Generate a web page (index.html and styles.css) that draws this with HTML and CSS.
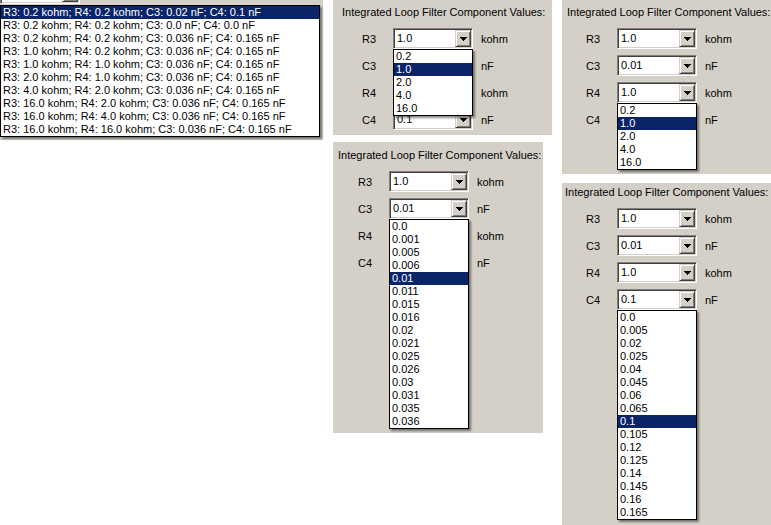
FILE: index.html
```html
<!DOCTYPE html>
<html lang="en">
<head>
    <meta charset="UTF-8">
    <title>Loop Filter Component Values</title>
    <link rel="stylesheet" href="styles.css">
</head>
<body>
<div class="page">
    <div class="col col-left">
        <div class="picker">
            <div class="stub">
                <div class="combo combo-wide">
                    <div class="value"></div>
                    <div class="btn"><svg width="7" height="4" viewBox="0 0 7 4"><path d="M0 0h7v1H0zM1 1h5v1H1zM2 2h3v1H2zM3 3h1v1H3z"/></svg></div>
                </div>
            </div>
            <div class="droplist biglist">
                <div class="item selected">R3: 0.2 kohm; R4: 0.2 kohm; C3: 0.02 nF; C4: 0.1 nF</div>
                <div class="item">R3: 0.2 kohm; R4: 0.2 kohm; C3: 0.0 nF; C4: 0.0 nF</div>
                <div class="item">R3: 0.2 kohm; R4: 0.2 kohm; C3: 0.036 nF; C4: 0.165 nF</div>
                <div class="item">R3: 1.0 kohm; R4: 0.2 kohm; C3: 0.036 nF; C4: 0.165 nF</div>
                <div class="item">R3: 1.0 kohm; R4: 1.0 kohm; C3: 0.036 nF; C4: 0.165 nF</div>
                <div class="item">R3: 2.0 kohm; R4: 1.0 kohm; C3: 0.036 nF; C4: 0.165 nF</div>
                <div class="item">R3: 4.0 kohm; R4: 2.0 kohm; C3: 0.036 nF; C4: 0.165 nF</div>
                <div class="item">R3: 16.0 kohm; R4: 2.0 kohm; C3: 0.036 nF; C4: 0.165 nF</div>
                <div class="item">R3: 16.0 kohm; R4: 4.0 kohm; C3: 0.036 nF; C4: 0.165 nF</div>
                <div class="item">R3: 16.0 kohm; R4: 16.0 kohm; C3: 0.036 nF; C4: 0.165 nF</div>
            </div>
        </div>
    </div>

    <div class="col col-mid">
        <!-- R3 list open -->
        <div class="panel panel-a">
            <div class="title">Integrated Loop Filter Component Values:</div>
            <div class="row">
                <span class="label">R3</span>
                <div class="combo-wrap">
                    <div class="combo"><div class="value">1.0</div><div class="btn"><svg width="7" height="4" viewBox="0 0 7 4"><path d="M0 0h7v1H0zM1 1h5v1H1zM2 2h3v1H2zM3 3h1v1H3z"/></svg></div></div>
                    <div class="droplist">
                        <div class="item">0.2</div>
                        <div class="item selected">1.0</div>
                        <div class="item">2.0</div>
                        <div class="item">4.0</div>
                        <div class="item">16.0</div>
                    </div>
                </div>
                <span class="unit">kohm</span>
            </div>
            <div class="row">
                <span class="label">C3</span>
                <div class="combo-wrap">
                    <div class="combo"><div class="value"></div><div class="btn"></div></div>
                </div>
                <span class="unit">nF</span>
            </div>
            <div class="row">
                <span class="label">R4</span>
                <div class="combo-wrap">
                    <div class="combo"><div class="value"></div><div class="btn"></div></div>
                </div>
                <span class="unit">kohm</span>
            </div>
            <div class="row">
                <span class="label">C4</span>
                <div class="combo-wrap">
                    <div class="combo"><div class="value">0.1</div><div class="btn"><svg width="7" height="4" viewBox="0 0 7 4"><path d="M0 0h7v1H0zM1 1h5v1H1zM2 2h3v1H2zM3 3h1v1H3z"/></svg></div></div>
                </div>
                <span class="unit">nF</span>
            </div>
        </div>

        <!-- C3 list open -->
        <div class="panel panel-b">
            <div class="title">Integrated Loop Filter Component Values:</div>
            <div class="row">
                <span class="label">R3</span>
                <div class="combo-wrap">
                    <div class="combo"><div class="value">1.0</div><div class="btn"><svg width="7" height="4" viewBox="0 0 7 4"><path d="M0 0h7v1H0zM1 1h5v1H1zM2 2h3v1H2zM3 3h1v1H3z"/></svg></div></div>
                </div>
                <span class="unit">kohm</span>
            </div>
            <div class="row">
                <span class="label">C3</span>
                <div class="combo-wrap">
                    <div class="combo"><div class="value">0.01</div><div class="btn"><svg width="7" height="4" viewBox="0 0 7 4"><path d="M0 0h7v1H0zM1 1h5v1H1zM2 2h3v1H2zM3 3h1v1H3z"/></svg></div></div>
                    <div class="droplist">
                        <div class="item">0.0</div>
                        <div class="item">0.001</div>
                        <div class="item">0.005</div>
                        <div class="item">0.006</div>
                        <div class="item selected">0.01</div>
                        <div class="item">0.011</div>
                        <div class="item">0.015</div>
                        <div class="item">0.016</div>
                        <div class="item">0.02</div>
                        <div class="item">0.021</div>
                        <div class="item">0.025</div>
                        <div class="item">0.026</div>
                        <div class="item">0.03</div>
                        <div class="item">0.031</div>
                        <div class="item">0.035</div>
                        <div class="item">0.036</div>
                    </div>
                </div>
                <span class="unit">nF</span>
            </div>
            <div class="row">
                <span class="label">R4</span>
                <div class="combo-wrap">
                    <div class="combo"><div class="value"></div><div class="btn"></div></div>
                </div>
                <span class="unit">kohm</span>
            </div>
            <div class="row">
                <span class="label">C4</span>
                <div class="combo-wrap">
                    <div class="combo"><div class="value"></div><div class="btn"></div></div>
                </div>
                <span class="unit">nF</span>
            </div>
        </div>
    </div>

    <div class="col col-right">
        <!-- R4 list open -->
        <div class="panel panel-c">
            <div class="title">Integrated Loop Filter Component Values:</div>
            <div class="row">
                <span class="label">R3</span>
                <div class="combo-wrap">
                    <div class="combo"><div class="value">1.0</div><div class="btn"><svg width="7" height="4" viewBox="0 0 7 4"><path d="M0 0h7v1H0zM1 1h5v1H1zM2 2h3v1H2zM3 3h1v1H3z"/></svg></div></div>
                </div>
                <span class="unit">kohm</span>
            </div>
            <div class="row">
                <span class="label">C3</span>
                <div class="combo-wrap">
                    <div class="combo"><div class="value">0.01</div><div class="btn"><svg width="7" height="4" viewBox="0 0 7 4"><path d="M0 0h7v1H0zM1 1h5v1H1zM2 2h3v1H2zM3 3h1v1H3z"/></svg></div></div>
                </div>
                <span class="unit">nF</span>
            </div>
            <div class="row">
                <span class="label">R4</span>
                <div class="combo-wrap">
                    <div class="combo"><div class="value">1.0</div><div class="btn"><svg width="7" height="4" viewBox="0 0 7 4"><path d="M0 0h7v1H0zM1 1h5v1H1zM2 2h3v1H2zM3 3h1v1H3z"/></svg></div></div>
                    <div class="droplist">
                        <div class="item">0.2</div>
                        <div class="item selected">1.0</div>
                        <div class="item">2.0</div>
                        <div class="item">4.0</div>
                        <div class="item">16.0</div>
                    </div>
                </div>
                <span class="unit">kohm</span>
            </div>
            <div class="row">
                <span class="label">C4</span>
                <div class="combo-wrap">
                    <div class="combo"><div class="value"></div><div class="btn"></div></div>
                </div>
                <span class="unit">nF</span>
            </div>
        </div>

        <!-- C4 list open -->
        <div class="panel panel-d">
            <div class="title">Integrated Loop Filter Component Values:</div>
            <div class="row">
                <span class="label">R3</span>
                <div class="combo-wrap">
                    <div class="combo"><div class="value">1.0</div><div class="btn"><svg width="7" height="4" viewBox="0 0 7 4"><path d="M0 0h7v1H0zM1 1h5v1H1zM2 2h3v1H2zM3 3h1v1H3z"/></svg></div></div>
                </div>
                <span class="unit">kohm</span>
            </div>
            <div class="row">
                <span class="label">C3</span>
                <div class="combo-wrap">
                    <div class="combo"><div class="value">0.01</div><div class="btn"><svg width="7" height="4" viewBox="0 0 7 4"><path d="M0 0h7v1H0zM1 1h5v1H1zM2 2h3v1H2zM3 3h1v1H3z"/></svg></div></div>
                </div>
                <span class="unit">nF</span>
            </div>
            <div class="row">
                <span class="label">R4</span>
                <div class="combo-wrap">
                    <div class="combo"><div class="value">1.0</div><div class="btn"><svg width="7" height="4" viewBox="0 0 7 4"><path d="M0 0h7v1H0zM1 1h5v1H1zM2 2h3v1H2zM3 3h1v1H3z"/></svg></div></div>
                </div>
                <span class="unit">kohm</span>
            </div>
            <div class="row">
                <span class="label">C4</span>
                <div class="combo-wrap">
                    <div class="combo"><div class="value">0.1</div><div class="btn"><svg width="7" height="4" viewBox="0 0 7 4"><path d="M0 0h7v1H0zM1 1h5v1H1zM2 2h3v1H2zM3 3h1v1H3z"/></svg></div></div>
                    <div class="droplist">
                        <div class="item">0.0</div>
                        <div class="item">0.005</div>
                        <div class="item">0.02</div>
                        <div class="item">0.025</div>
                        <div class="item">0.04</div>
                        <div class="item">0.045</div>
                        <div class="item">0.06</div>
                        <div class="item">0.065</div>
                        <div class="item selected">0.1</div>
                        <div class="item">0.105</div>
                        <div class="item">0.12</div>
                        <div class="item">0.125</div>
                        <div class="item">0.14</div>
                        <div class="item">0.145</div>
                        <div class="item">0.16</div>
                        <div class="item">0.165</div>
                    </div>
                </div>
                <span class="unit">nF</span>
            </div>
        </div>
    </div>
</div>
</body>
</html>
```

FILE: styles.css
```css
body {
    margin: 0;
    background: white;
    font-family: 'Liberation Sans', Arial, sans-serif;
    font-size: 11px;
    color: #000;
}
.page {
    display: flex;
    width: 771px;
    height: 525px;
    overflow: hidden;
}
.col {
    display: flex;
    flex-direction: column;
}
.col-left {
    width: 323px;
}
.col-mid {
    width: 219px;
    margin-left: 10px;
}
.col-right {
    width: 209px;
    margin-left: 10px;
}

/* top-left picker */
.picker {
    background: #d4d0c8;
    height: 140px;
}
.stub {
    height: 4px;
    overflow: hidden;
    display: flex;
    align-items: flex-end;
}
.combo-wide {
    width: 320px;
    flex-shrink: 0;
}
.biglist {
    margin-top: 1px;
    width: 320px;
    box-sizing: border-box;
}

/* panels */
.panel {
    background: #d4d0c8;
    box-sizing: border-box;
    padding-top: 6px;
}
.panel-a {
    height: 135px;
    --title-x: 9px;
    --combo-x: 60px;
}
.panel-b {
    margin-top: 7px;
    width: 210px;
    height: 291px;
    padding-top: 7px;
    --title-x: 5px;
    --combo-x: 56px;
}
.panel-c {
    height: 174px;
    --title-x: 5px;
    --combo-x: 55px;
}
.panel-d {
    margin-top: 9px;
    flex: 1;
    padding-top: 3px;
    --title-x: 3px;
    --combo-x: 55px;
}
.title {
    line-height: 13px;
    padding-left: var(--title-x);
    white-space: nowrap;
}
.row {
    display: flex;
    align-items: center;
    height: 21px;
    margin-top: 6px;
    padding-left: calc(var(--combo-x) - 31px);
}
.title + .row {
    margin-top: 9px;
}
.label {
    width: 31px;
}
.unit {
    margin-left: 8px;
}

/* combobox, classic look */
.combo-wrap {
    position: relative;
}
.combo {
    display: flex;
    width: 80px;
    height: 21px;
    box-sizing: border-box;
    padding: 1px;
    background: white;
    border: 1px solid;
    border-color: #808080 #fff #fff #808080;
    box-shadow: inset 1px 1px #404040, inset -1px -1px #d4d0c8;
}
.value {
    flex: 1;
    padding-left: 2px;
    line-height: 17px;
    white-space: nowrap;
    overflow: hidden;
}
.btn {
    width: 16px;
    height: 17px;
    box-sizing: border-box;
    background: #d4d0c8;
    border: 1px solid;
    border-color: #d4d0c8 #404040 #404040 #d4d0c8;
    box-shadow: inset 1px 1px #fff, inset -1px -1px #808080;
    display: flex;
    align-items: center;
    justify-content: center;
}
.btn svg {
    display: block;
    fill: #000;
    shape-rendering: crispEdges;
}

/* dropdown lists */
.droplist {
    background: white;
    border: 1px solid #000;
    box-shadow: 2px 2px 2px rgba(0, 0, 0, 0.45);
}
.combo-wrap .droplist {
    position: absolute;
    top: 100%;
    left: 0;
    width: 80px;
    box-sizing: border-box;
    z-index: 2;
}
.item {
    height: 13px;
    line-height: 13px;
    padding-left: 2px;
    white-space: nowrap;
}
.item.selected {
    background: #0a246a;
    color: white;
}
```
